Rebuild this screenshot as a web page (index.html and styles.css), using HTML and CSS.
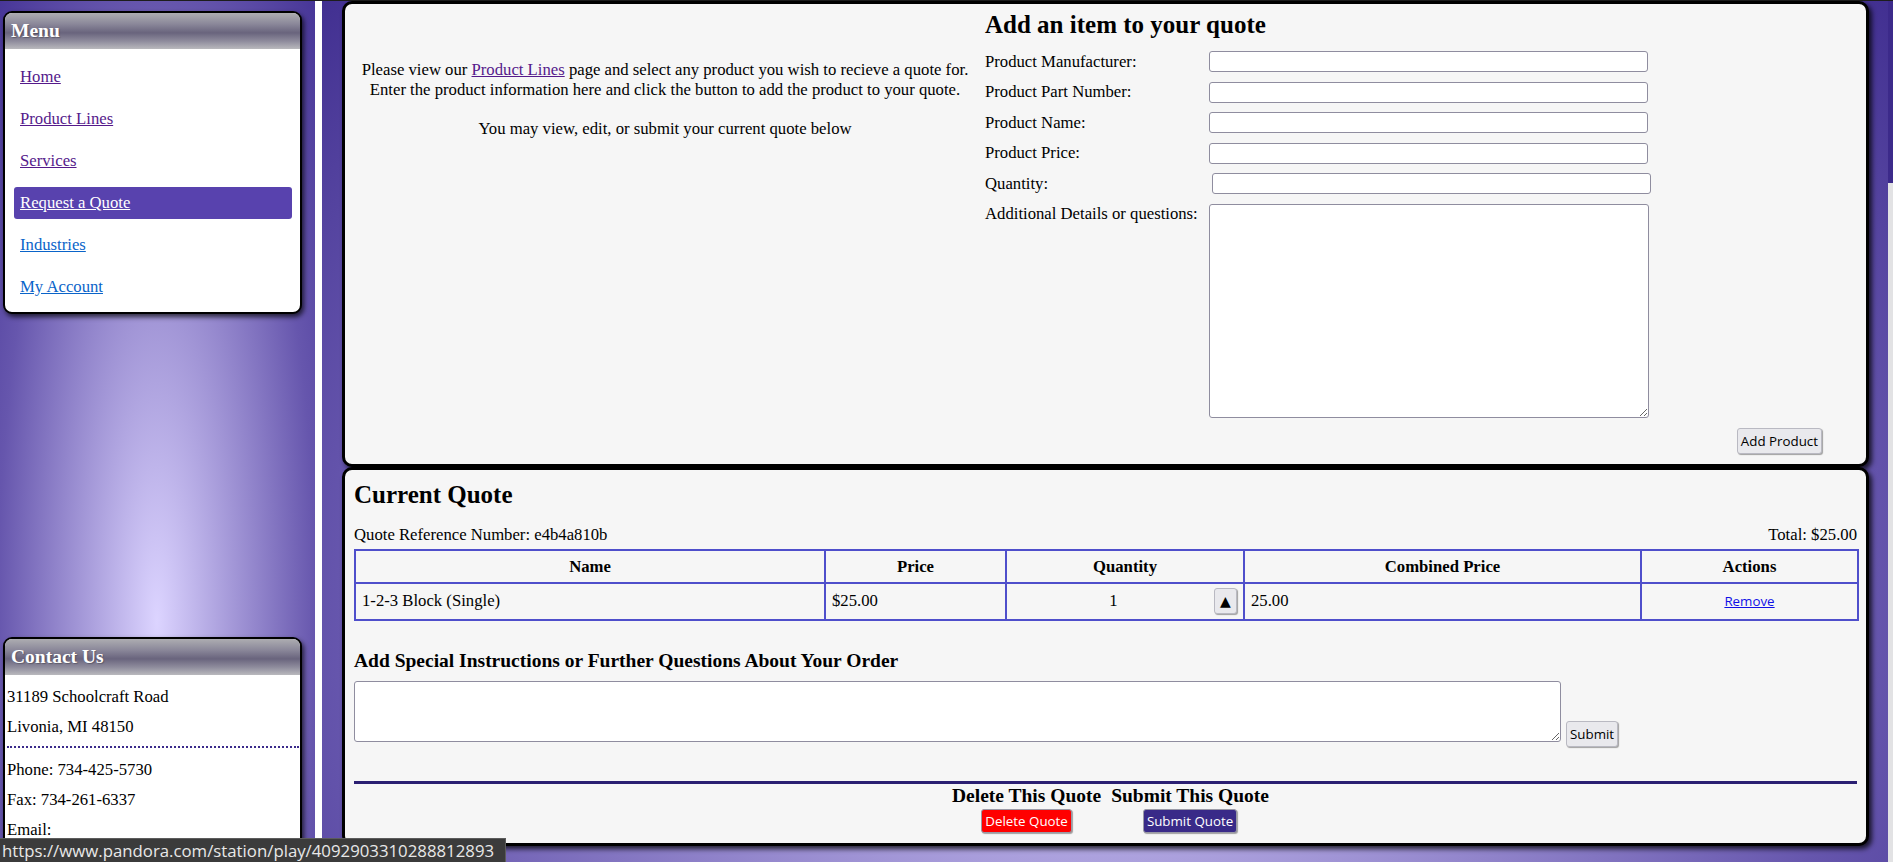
FILE: index.html
```html
<!DOCTYPE html>
<html lang="en">
<head>
<meta charset="utf-8">
<title>Request a Quote</title>
<link rel="stylesheet" href="styles.css">
</head>
<body>
<div class="page">
  <aside class="sidebar">
    <section class="box menu-box">
      <h3 class="box-title">Menu</h3>
      <nav class="menu">
        <a class="menu-link visited" href="#">Home</a>
        <a class="menu-link visited" href="#">Product Lines</a>
        <a class="menu-link visited" href="#">Services</a>
        <a class="menu-link active" href="#">Request a Quote</a>
        <a class="menu-link" href="#">Industries</a>
        <a class="menu-link" href="#">My Account</a>
      </nav>
    </section>
    <section class="box contact-box">
      <h3 class="box-title">Contact Us</h3>
      <div class="contact-body">
        <div class="contact-line">31189 Schoolcraft Road</div>
        <div class="contact-line">Livonia, MI 48150</div>
        <div class="contact-sep"></div>
        <div class="contact-line">Phone: 734-425-5730</div>
        <div class="contact-line">Fax: 734-261-6337</div>
        <div class="contact-line">Email:</div>
      </div>
    </section>
  </aside>
  <div class="divider"></div>
  <main class="main">
    <section class="panel add-panel">
      <div class="intro">
        <p>Please view our <a class="visited" href="#">Product Lines</a> page and select any product you wish to recieve a quote for.<br>Enter the product information here and click the button to add the product to your quote.<br><br>You may view, edit, or submit your current quote below</p>
      </div>
      <form class="add-form">
        <h2 class="panel-title">Add an item to your quote</h2>
        <div class="form-grid">
          <label>Product Manufacturer:</label><input type="text">
          <label>Product Part Number:</label><input type="text">
          <label>Product Name:</label><input type="text">
          <label>Product Price:</label><input type="text">
          <label>Quantity:</label><input class="shifted" type="text">
          <label class="top">Additional Details or questions:</label><textarea class="details"></textarea>
        </div>
        <div class="form-actions"><button type="button" class="btn btn-add">Add Product</button></div>
      </form>
    </section>
    <section class="panel quote-panel">
      <h2 class="panel-title quote-title">Current Quote</h2>
      <div class="ref-row"><span>Quote Reference Number: e4b4a810b</span><span>Total: $25.00</span></div>
      <table class="quote-table">
        <colgroup>
          <col class="c-name"><col class="c-price"><col class="c-qty"><col class="c-comb"><col class="c-act">
        </colgroup>
        <thead>
          <tr><th>Name</th><th>Price</th><th>Quantity</th><th>Combined Price</th><th>Actions</th></tr>
        </thead>
        <tbody>
          <tr>
            <td>1-2-3 Block (Single)</td>
            <td>$25.00</td>
            <td><div class="qty"><span class="qty-val">1</span><button type="button" class="btn btn-spin">&#9650;</button></div></td>
            <td>25.00</td>
            <td class="center"><a class="remove" href="#">Remove</a></td>
          </tr>
        </tbody>
      </table>
      <h3 class="special-title">Add Special Instructions or Further Questions About Your Order</h3>
      <div class="special-row">
        <textarea class="special"></textarea>
        <button type="button" class="btn btn-submit">Submit</button>
      </div>
      <hr class="rule">
      <div class="final">
        <div class="final-col">
          <h3 class="final-title">Delete This Quote</h3>
          <button type="button" class="btn btn-delete">Delete Quote</button>
        </div>
        <div class="final-col">
          <h3 class="final-title">Submit This Quote</h3>
          <button type="button" class="btn btn-send">Submit Quote</button>
        </div>
      </div>
    </section>
  </main>
  <div class="scrollbar"><div class="thumb"></div></div>
</div>
<div class="status">https://www.pandora.com/station/play/4092903310288812893</div>
</body>
</html>
```
FILE: styles.css
```css
html, body {
  margin: 0;
  height: 100%;
  overflow: hidden;
}
body {
  font-family: "Liberation Serif", "Times New Roman", serif;
  font-size: 16.7px;
  line-height: 19.5px;
  color: #000;
  background: #5a4aa6;
}
a { color: #0000ee; }
a.visited { color: #551a8b; }

.page {
  display: flex;
  height: 862px;
  box-sizing: border-box;
  border-top: 1px solid #1d1d1d;
}

/* ---------- sidebar ---------- */
.sidebar {
  width: 315px;
  flex: none;
  box-sizing: border-box;
  padding: 10px 0 0 3px;
  display: flex;
  flex-direction: column;
  align-items: flex-start;
  background: radial-gradient(ellipse 265px 1030px at 157px 620px, #dcd4ff 0%, #6656ad 60%, #34228a 100%);
}
.box {
  flex: none;
  width: 299px;
  box-sizing: border-box;
  border: 2px solid #000;
  border-radius: 9px;
  background: #fff;
  overflow: hidden;
  box-shadow: 2px 3px 5px rgba(0, 0, 0, 0.7);
}
.box-title {
  margin: 0;
  height: 36px;
  line-height: 36px;
  padding-left: 6px;
  font-size: 19.5px;
  font-weight: bold;
  color: #fff;
  text-shadow: 1px 1px 1px rgba(0, 0, 0, 0.25);
  background: linear-gradient(#adadb1 0%, #8b889a 30%, #69647d 55%, #8e8b9c 78%, #b9b9bd 100%);
}
.menu {
  display: flex;
  flex-direction: column;
  gap: 10px;
  padding: 12px 8.5px 9px;
}
.menu-link {
  display: block;
  height: 32px;
  line-height: 32px;
  padding-left: 6.5px;
  border-radius: 3px;
  color: #0a64c9;
}
.menu-link.visited { color: #551a8b; }
.menu-link.active {
  background: #5842ae;
  color: #fff;
}
.contact-box {
  margin-top: 323px;
}
.contact-body {
  padding: 7px 0 0 2px;
}
.contact-line {
  height: 30px;
  line-height: 30px;
}
.contact-sep {
  margin: 4px 1px 7px 0;
  border-top: 2px dotted #3b2b8b;
}

.divider {
  width: 7px;
  flex: none;
  background: #fff;
}

/* ---------- main ---------- */
.main {
  flex: 1;
  min-width: 0;
  padding: 0 19px 0 20px;
  background: radial-gradient(ellipse 1270px 1030px at 783px 620px, #d8d0fc 0%, #6656ad 60%, #2e1b82 100%);
}
.scrollbar {
  width: 5px;
  flex: none;
  background: #e2e2e4;
}
.thumb {
  height: 182px;
  background: #3c2a8a;
}

.panel {
  border: 3px solid #000;
  border-radius: 10px;
  background: #f6f6f6;
  box-shadow: 3px 3px 5px rgba(0, 0, 0, 0.75);
}
.panel-title {
  margin: 6px 0 12px;
  font-size: 25px;
  line-height: 29px;
  font-weight: bold;
}

/* add panel */
.add-panel {
  display: flex;
  padding-bottom: 10.5px;
}
.intro {
  width: 640px;
  flex: none;
  text-align: center;
  padding-top: 56px;
}
.intro p { margin: 0; }
.add-form {
  flex: 1;
  padding-right: 44px;
}
.form-grid {
  display: grid;
  grid-template-columns: 224px 439px;
  row-gap: 9.5px;
  align-items: center;
}
.form-grid label.top { align-self: start; }
.form-grid input,
.form-grid textarea,
.special {
  box-sizing: border-box;
  margin: 0;
  background: #fff;
  border: 1px solid #8f8d9f;
  border-radius: 3px;
  font: 13.33px "Liberation Mono", monospace;
}
.form-grid input {
  height: 21px;
  width: 439px;
}
.form-grid input.shifted {
  width: 439px;
  margin-left: 3px;
}
.details {
  width: 440px;
  height: 214px;
}
.form-actions {
  display: flex;
  justify-content: flex-end;
  margin-top: 10px;
}

/* buttons */
.btn {
  font-family: "Open Sans", sans-serif;
  font-size: 13.33px;
  color: #000;
  background: #e9e9ed;
  border: 1px solid #b9b9c2;
  border-radius: 3px;
  padding: 0 3px;
  height: 26px;
  white-space: nowrap;
  box-shadow: 1px 1px 1px rgba(0, 0, 0, 0.35);
  margin: 0;
}

/* quote panel */
.quote-panel {
  padding: 0 9px 10px;
}
.quote-title {
  margin: 10px 0 16px;
}
.ref-row {
  display: flex;
  justify-content: space-between;
  margin-bottom: 4px;
}
.quote-table {
  width: 100%;
  table-layout: fixed;
  border-collapse: collapse;
  border: 2px solid #4f4fcb;
}
.c-name { width: 470px; }
.c-price { width: 181px; }
.c-qty { width: 238px; }
.c-comb { width: 397px; }
.c-act { width: 217px; }
.quote-table th,
.quote-table td {
  border: 2px solid #4f4fcb;
  padding: 4.5px 6px;
  text-align: left;
}
.quote-table th {
  text-align: center;
  padding: 6px;
  line-height: 19px;
}
.quote-table td.center { text-align: center; }
.qty {
  display: flex;
  align-items: center;
}
.qty-val {
  flex: 1;
  text-align: center;
}
.btn-spin {
  width: 23px;
  padding: 0;
  font-family: "DejaVu Sans", sans-serif;
  font-size: 14px;
  line-height: 24px;
}
.remove {
  font-family: "Open Sans", sans-serif;
  font-size: 13.33px;
  color: #1010e6;
}
.special-title {
  margin: 29px 0 9.5px;
  font-size: 19.5px;
  line-height: 22.4px;
}
.special-row {
  display: flex;
  align-items: flex-start;
}
.special {
  width: 1207px;
  height: 61px;
  border-radius: 3px;
}
.btn-submit {
  margin: 40px 0 0 5px;
}
.rule {
  border: none;
  height: 3px;
  background: #2b1f72;
  margin: 34px 0 0;
}
.final {
  display: flex;
  justify-content: center;
  gap: 10px;
  padding-left: 10px;
}
.final-col {
  text-align: center;
}
.final-title {
  margin: 1px 0 1.5px;
  font-size: 19.5px;
  line-height: 22.4px;
}
.btn-delete,
.btn-send {
  height: 24px;
  color: #fff;
  border-color: #9a9aa6;
}
.btn-delete { background: #ff0000; }
.btn-send { background: #392a88; }

/* browser status bubble */
.status {
  position: fixed;
  left: 0;
  bottom: 0;
  width: 506px;
  height: 24px;
  box-sizing: border-box;
  overflow: hidden;
  padding-left: 2px;
  background: #3b3b3b;
  border-top: 1px solid #5c5c5c;
  border-right: 1px solid #5c5c5c;
  color: #e8e8e8;
  font-family: "Open Sans", sans-serif;
  font-size: 16.8px;
  line-height: 23px;
  white-space: nowrap;
}
```
